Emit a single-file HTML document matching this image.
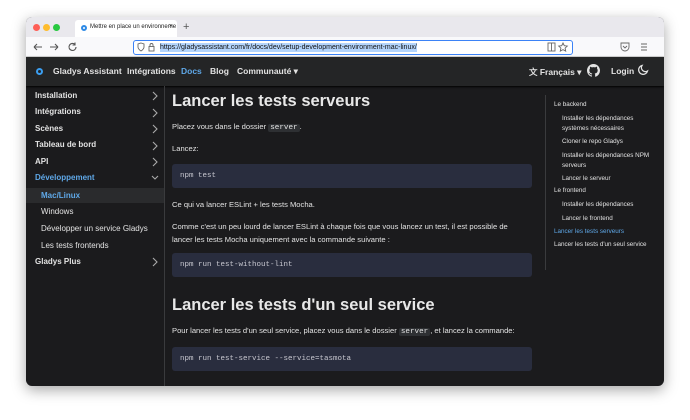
<!DOCTYPE html>
<html><head><meta charset="utf-8"><style>
*{margin:0;padding:0;box-sizing:border-box}
body{width:690px;height:420px;background:#fff;font-family:"Liberation Sans",sans-serif;position:relative;overflow:hidden}
.a{position:absolute;white-space:nowrap}
#win{position:absolute;left:26px;top:17px;width:638px;height:369px;background:#1b1b1d;border-radius:6px;overflow:hidden;box-shadow:0 4px 14px rgba(0,0,0,.35)}
.sb{color:#e3e3e3;font-size:8px;font-weight:bold}
.p{color:#e3e3e3;font-size:7.6px}
.code{position:absolute;left:146px;width:360px;height:24px;background:#292d3e;border-radius:3px;color:#c8c8d0;font-family:"Liberation Mono",monospace;font-size:7.5px;line-height:24px;padding-left:8px}
.ic{background:#2e3033;font-family:"Liberation Mono",monospace;border-radius:2px;padding:0 2px}
.t{color:#e3e3e3;font-size:6.3px}
svg.c{position:absolute;left:125px}
</style></head><body>
<div id="win">
 <div class="a" style="left:0;top:0;width:638px;height:20px;background:#e9e8ed"></div>
 <div class="a" style="left:7px;top:7px;width:7px;height:7px;border-radius:50%;background:#fe5f57"></div>
 <div class="a" style="left:17px;top:7px;width:7px;height:7px;border-radius:50%;background:#febc2e"></div>
 <div class="a" style="left:27px;top:7px;width:7px;height:7px;border-radius:50%;background:#28c840"></div>
 <div class="a" style="left:49px;top:3px;width:102px;height:17px;background:#fff;border-radius:3px 3px 0 0"></div>
 <div class="a" style="left:55px;top:8px;width:6px;height:6px;border-radius:50%;border:2px solid #2e8ae6"></div>
 <div class="a" style="left:64px;top:7px;font-size:6px;color:#222">Mettre en place un environneme</div>
 <div class="a" style="left:143px;top:6px;font-size:7px;color:#444">×</div>
 <div class="a" style="left:157px;top:4px;font-size:11px;color:#555">+</div>
 <div class="a" style="left:0;top:20px;width:638px;height:20px;background:#f9f9fb;border-bottom:1px solid #ddd"></div>
 <svg class="a" style="left:5px;top:24px" width="50" height="12" viewBox="0 0 50 12" fill="none" stroke="#555" stroke-width="1.1"><path d="M3 6h8M3 6l3-3M3 6l3 3"/><path d="M19 6h8M27 6l-3-3M27 6l-3 3"/><path d="M44 3.5a3.5 3.5 0 1 0 1 2.5M44 1.5v2.5h-2.5"/></svg>
 <div class="a" style="left:107px;top:23px;width:440px;height:15px;background:#fff;border:1.5px solid #3b82f6;border-radius:3px"></div>
 <div class="a" style="left:134px;top:26px;height:9px;background:#b3d4fc;font-size:7px;line-height:9px;color:#111">https://gladysassistant.com/fr/docs/dev/setup-development-environment-mac-linux/</div>
 <svg class="a" style="left:111px;top:25px" width="20" height="10" viewBox="0 0 20 10" fill="none" stroke="#666" stroke-width="0.9"><path d="M4 1l3 1v3c0 2-3 4-3 4S1 7 1 5V2z"/><rect x="12" y="4.5" width="5" height="4.5"/><path d="M13 4.5V3a1.5 1.5 0 0 1 3 0v1.5"/></svg>
 <svg class="a" style="left:521px;top:25px" width="22" height="10" viewBox="0 0 22 10" fill="none" stroke="#666" stroke-width="0.9"><rect x="1" y="1" width="7" height="8"/><path d="M4.5 1v8"/><path d="M16 1l1.3 2.7 3 .4-2.2 2 .6 3-2.7-1.5-2.7 1.5.6-3-2.2-2 3-.4z"/></svg>
 <svg class="a" style="left:593px;top:25px" width="30" height="10" viewBox="0 0 30 10" fill="none" stroke="#666" stroke-width="0.9"><path d="M2 1h8v4a4 4 0 0 1-8 0z"/><path d="M4 4l2 2 2-2"/><path d="M22 2h6M22 5h6M22 8h6"/></svg>
 <div class="a" style="left:0;top:40px;width:638px;height:29px;background:#242526;box-shadow:0 1px 2px #000"></div>
 <div class="a" style="left:10px;top:51px;width:7px;height:7px;border-radius:50%;border:2px solid #3b9ef0"></div>
 <div class="a" style="left:27px;top:49px;font-size:8.5px;font-weight:bold;color:#e3e3e3">Gladys Assistant</div>
 <div class="a" style="left:101px;top:49px;font-size:8.5px;font-weight:bold;color:#e3e3e3">Intégrations</div>
 <div class="a" style="left:155px;top:49px;font-size:8.5px;font-weight:bold;color:#5fa8e8">Docs</div>
 <div class="a" style="left:184px;top:49px;font-size:8.5px;font-weight:bold;color:#e3e3e3">Blog</div>
 <div class="a" style="left:211px;top:49px;font-size:8.5px;font-weight:bold;color:#e3e3e3">Communauté ▾</div>
 <div class="a" style="left:503px;top:49px;font-size:8.5px;font-weight:bold;color:#e3e3e3">文 Français ▾</div>
 <svg class="a" style="left:561px;top:47px" width="13" height="13" viewBox="0 0 16 16"><path fill="#e3e3e3" d="M8 0C3.58 0 0 3.58 0 8c0 3.54 2.29 6.53 5.47 7.59.4.07.55-.17.55-.38v-1.33c-2.23.48-2.7-1.07-2.7-1.07-.36-.92-.89-1.17-.89-1.17-.73-.5.06-.49.06-.49.8.06 1.23.83 1.23.83.71 1.22 1.87.87 2.33.66.07-.52.28-.87.51-1.07-1.78-.2-3.64-.89-3.64-3.95 0-.87.31-1.59.82-2.15-.08-.2-.36-1.02.08-2.12 0 0 .67-.21 2.2.82a7.6 7.6 0 0 1 4 0c1.53-1.04 2.2-.82 2.2-.82.44 1.1.16 1.92.08 2.12.51.56.82 1.27.82 2.15 0 3.07-1.87 3.75-3.65 3.95.29.25.54.73.54 1.48v2.2c0 .21.15.46.55.38A8 8 0 0 0 16 8c0-4.42-3.58-8-8-8z"/></svg>
 <div class="a" style="left:585px;top:49px;font-size:8.5px;font-weight:bold;color:#e3e3e3">Login</div>
 <svg class="a" style="left:611px;top:47px" width="12" height="12" viewBox="0 0 12 12" fill="none" stroke="#e3e3e3" stroke-width="1.3"><path d="M5 1.5a4.5 4.5 0 1 0 5.5 5.5A4 4 0 0 1 5 1.5z"/></svg>
 <div class="a" style="left:138px;top:69px;width:1px;height:300px;background:#3a3b3d"></div>
 <div class="a" style="left:0;top:171px;width:138px;height:15px;background:#2a2b2d"></div>
 <div class="a sb" style="left:9px;top:74px">Installation</div>
 <div class="a sb" style="left:9px;top:90px">Intégrations</div>
 <div class="a sb" style="left:9px;top:107px">Scènes</div>
 <div class="a sb" style="left:9px;top:123px">Tableau de bord</div>
 <div class="a sb" style="left:9px;top:140px">API</div>
 <div class="a sb" style="left:9px;top:156px;color:#5fa8e8">Développement</div>
 <svg class="c" style="top:74px" width="8" height="160" viewBox="0 0 8 160" fill="none" stroke="#aaa" stroke-width="1.1"><path d="M2 1l4 4-4 4M2 18l4 4-4 4M2 34l4 4-4 4M2 51l4 4-4 4M2 67l4 4-4 4M1 85l3 3 3-3M2 167l4 4-4 4"/></svg>
 <svg class="c" style="top:240px" width="8" height="10" viewBox="0 0 8 10" fill="none" stroke="#aaa" stroke-width="1.1"><path d="M2 1l4 4-4 4"/></svg>
 <div class="a sb" style="left:15px;top:174px;color:#5fa8e8">Mac/Linux</div>
 <div class="a sb" style="left:15px;top:190px;font-weight:normal">Windows</div>
 <div class="a sb" style="left:15px;top:207px;font-weight:normal">Développer un service Gladys</div>
 <div class="a sb" style="left:15px;top:224px;font-weight:normal">Les tests frontends</div>
 <div class="a sb" style="left:9px;top:240px">Gladys Plus</div>
 <div class="a" style="left:146px;top:75px;font-size:16.5px;font-weight:bold;color:#e8e8e8">Lancer les tests serveurs</div>
 <div class="a p" style="left:146px;top:105px">Placez vous dans le dossier <span class="ic">server</span>.</div>
 <div class="a p" style="left:146px;top:127px">Lancez:</div>
 <div class="code" style="top:147px">npm test</div>
 <div class="a p" style="left:146px;top:183px">Ce qui va lancer ESLint + les tests Mocha.</div>
 <div class="a p" style="left:146px;top:205px">Comme c'est un peu lourd de lancer ESLint à chaque fois que vous lancez un test, il est possible de</div>
 <div class="a p" style="left:146px;top:218px">lancer les tests Mocha uniquement avec la commande suivante :</div>
 <div class="code" style="top:236px">npm run test-without-lint</div>
 <div class="a" style="left:146px;top:279px;font-size:16.5px;font-weight:bold;color:#e8e8e8">Lancer les tests d'un seul service</div>
 <div class="a p" style="left:146px;top:309px">Pour lancer les tests d'un seul service, placez vous dans le dossier <span class="ic">server</span>, et lancez la commande:</div>
 <div class="code" style="top:330px">npm run test-service --service=tasmota</div>
 <div class="a" style="left:519px;top:78px;width:1px;height:175px;background:#3a3b3d"></div>
 <div class="a t" style="left:528px;top:84px">Le backend</div>
 <div class="a t" style="left:536px;top:98px">Installer les dépendances</div>
 <div class="a t" style="left:536px;top:108px">systèmes nécessaires</div>
 <div class="a t" style="left:536px;top:121px">Cloner le repo Gladys</div>
 <div class="a t" style="left:536px;top:135px">Installer les dépendances NPM</div>
 <div class="a t" style="left:536px;top:145px">serveurs</div>
 <div class="a t" style="left:536px;top:158px">Lancer le serveur</div>
 <div class="a t" style="left:528px;top:170px">Le frontend</div>
 <div class="a t" style="left:536px;top:184px">Installer les dépendances</div>
 <div class="a t" style="left:536px;top:198px">Lancer le frontend</div>
 <div class="a t" style="left:528px;top:211px;color:#5fa8e8">Lancer les tests serveurs</div>
 <div class="a t" style="left:528px;top:224px">Lancer les tests d'un seul service</div>
</div>
</body></html>
